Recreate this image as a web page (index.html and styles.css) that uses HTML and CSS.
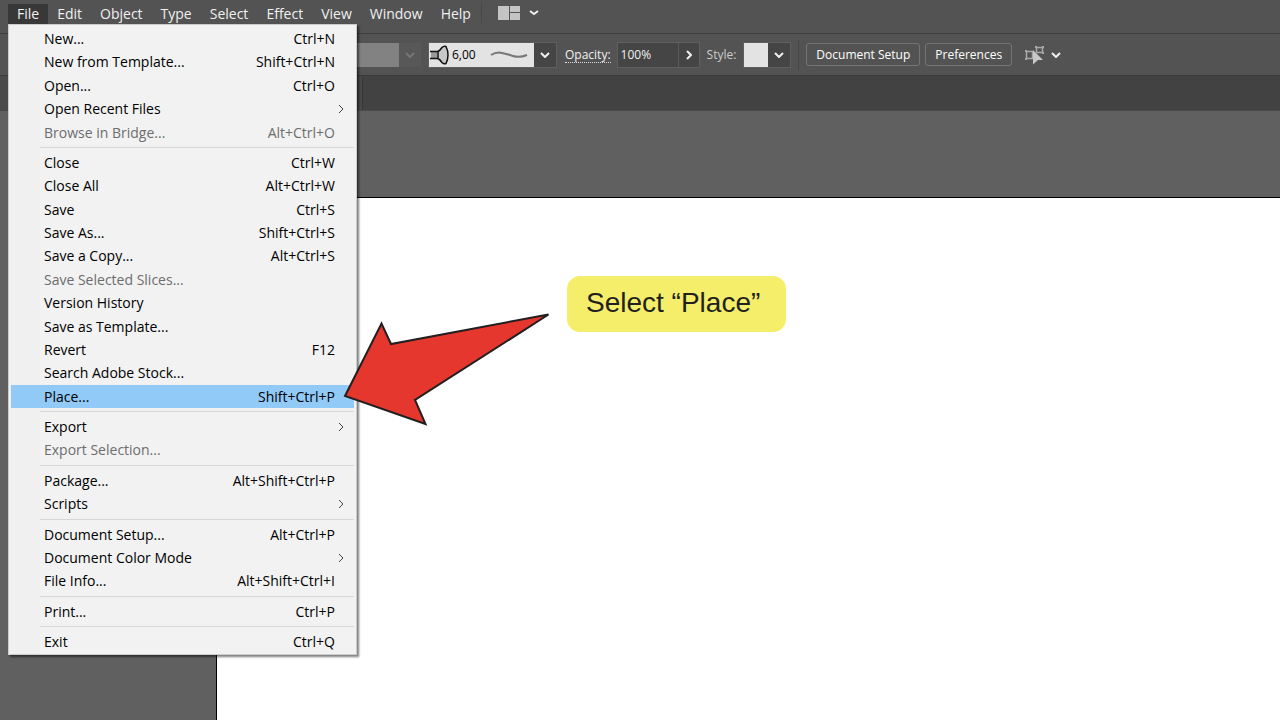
FILE: index.html
```html
<!DOCTYPE html>
<html lang="en">
<head>
<meta charset="utf-8">
<title>Illustrator – File menu</title>
<link rel="stylesheet" href="styles.css">
</head>
<body>
<header class="menubar">
  <nav class="menus" aria-label="Main menu">
    <div class="menu-root">
      <button class="menu-button is-open" type="button" aria-expanded="true">File</button>
      <div class="menu" role="menu">
        <button class="item" type="button"><span>New...</span><span>Ctrl+N</span></button>
        <button class="item" type="button"><span>New from Template...</span><span>Shift+Ctrl+N</span></button>
        <button class="item" type="button"><span>Open...</span><span>Ctrl+O</span></button>
        <button class="item has-sub" type="button"><span>Open Recent Files</span><svg class="sub" viewBox="0 0 6 10"><path d="M1 1l4 4-4 4"/></svg></button>
        <button class="item" type="button" disabled><span>Browse in Bridge...</span><span>Alt+Ctrl+O</span></button>
        <hr class="rule">
        <button class="item" type="button"><span>Close</span><span>Ctrl+W</span></button>
        <button class="item" type="button"><span>Close All</span><span>Alt+Ctrl+W</span></button>
        <button class="item" type="button"><span>Save</span><span>Ctrl+S</span></button>
        <button class="item" type="button"><span>Save As...</span><span>Shift+Ctrl+S</span></button>
        <button class="item" type="button"><span>Save a Copy...</span><span>Alt+Ctrl+S</span></button>
        <button class="item" type="button" disabled><span>Save Selected Slices...</span></button>
        <button class="item" type="button"><span>Version History</span></button>
        <button class="item" type="button"><span>Save as Template...</span></button>
        <button class="item" type="button"><span>Revert</span><span>F12</span></button>
        <button class="item" type="button"><span>Search Adobe Stock...</span></button>
        <button class="item is-active" type="button"><span>Place...</span><span>Shift+Ctrl+P</span></button>
        <hr class="rule">
        <button class="item has-sub" type="button"><span>Export</span><svg class="sub" viewBox="0 0 6 10"><path d="M1 1l4 4-4 4"/></svg></button>
        <button class="item" type="button" disabled><span>Export Selection...</span></button>
        <hr class="rule">
        <button class="item" type="button"><span>Package...</span><span>Alt+Shift+Ctrl+P</span></button>
        <button class="item has-sub" type="button"><span>Scripts</span><svg class="sub" viewBox="0 0 6 10"><path d="M1 1l4 4-4 4"/></svg></button>
        <hr class="rule">
        <button class="item" type="button"><span>Document Setup...</span><span>Alt+Ctrl+P</span></button>
        <button class="item has-sub" type="button"><span>Document Color Mode</span><svg class="sub" viewBox="0 0 6 10"><path d="M1 1l4 4-4 4"/></svg></button>
        <button class="item" type="button"><span>File Info...</span><span>Alt+Shift+Ctrl+I</span></button>
        <hr class="rule">
        <button class="item" type="button"><span>Print...</span><span>Ctrl+P</span></button>
        <hr class="rule">
        <button class="item" type="button"><span>Exit</span><span>Ctrl+Q</span></button>
      </div>
    </div>
    <button class="menu-button" type="button">Edit</button>
    <button class="menu-button" type="button">Object</button>
    <button class="menu-button" type="button">Type</button>
    <button class="menu-button" type="button">Select</button>
    <button class="menu-button" type="button">Effect</button>
    <button class="menu-button" type="button">View</button>
    <button class="menu-button" type="button">Window</button>
    <button class="menu-button" type="button">Help</button>
  </nav>
  <button class="workspace" type="button" aria-label="Arrange documents">
    <svg width="22" height="14" viewBox="0 0 22 14" fill="#c4c4c4"><path d="M0 0h11v14H0zM12 0h10v6H12zM12 7h10v7H12z"/></svg>
    <svg class="chevron" width="10" height="6" viewBox="0 0 10 6"><path d="M1 1l4 3 4-3"/></svg>
  </button>
</header>

<section class="controls" aria-label="Control bar">
  <div class="combo is-dim">
    <input class="profile" type="text" aria-label="Width profile" disabled>
    <button class="drop" type="button" aria-label="Profile options" disabled><svg class="chevron" width="10" height="6" viewBox="0 0 10 6"><path d="M1 1l4 4 4-4"/></svg></button>
  </div>
  <div class="combo brush">
    <button class="brush-face" type="button">
      <svg width="20" height="20" viewBox="0 0 20 20" stroke="#111" stroke-width="1.500"><path d="M1 6.500h6v7H1z" fill="#999" stroke="none"/><path d="M8 6.500q2-1 4-4 2-2 4-1 2 4 2 8.500t-2 8.500q-2 1-4-1-2-3-4-4z" fill="#c8c8c8"/><path d="M0 6.500h8M0 13.500h8" fill="none"/></svg>
      <span>6,00</span>
      <svg class="stroke" width="38" height="8" viewBox="0 0 38 8"><path d="M1 4C9-1 16 3 23 5q7 2 14-1" fill="none" stroke="#777" stroke-width="2"/></svg>
    </button>
    <button class="drop" type="button" aria-label="Brushes"><svg class="chevron" width="10" height="6" viewBox="0 0 10 6"><path d="M1 1l4 4 4-4"/></svg></button>
  </div>
  <label class="opacity-label" for="opacity">Opacity:</label>
  <div class="combo">
    <input class="opacity" id="opacity" type="text" value="100%">
    <button class="drop narrow" type="button" aria-label="Opacity slider"><svg class="chevron" width="6" height="10" viewBox="0 0 6 10"><path d="M1 1l4 4-4 4"/></svg></button>
  </div>
  <span class="style-label" id="style-label">Style:</span>
  <div class="combo" role="group" aria-labelledby="style-label">
    <button class="swatch" type="button" aria-label="Graphic style"></button>
    <button class="drop" type="button" aria-label="Styles"><svg class="chevron" width="10" height="6" viewBox="0 0 10 6"><path d="M1 1l4 4 4-4"/></svg></button>
  </div>
  <div class="actions">
    <button class="action" type="button">Document Setup</button>
    <button class="action" type="button">Preferences</button>
    <button class="select-similar" type="button" aria-label="Select similar objects">
      <svg width="20" height="20" viewBox="0 0 20 20" fill="none" stroke="#a8a8a8"><path d="M1.500 6.500h6v7h-6zM11.500 2.500h6v5h-6z" stroke-width="1.500"/><path d="M0 5h2v2H0zM0 13h2v2H0zM10 1h2v2h-2zM17 1h2v2h-2zM17 7h2v2h-2z" fill="#a8a8a8" stroke="none"/><path d="M8 5l10 10h-5L8 19.500z" fill="#c8c8c8" stroke="none"/></svg>
      <svg class="chevron" width="10" height="6" viewBox="0 0 10 6"><path d="M1 1l4 4 4-4"/></svg>
    </button>
  </div>
</section>

<div class="tabs"><div class="tab"></div></div>

<main class="workarea">
  <div class="artboard"></div>
</main>

<svg class="arrow" width="210" height="116" viewBox="342 312 210 116"><path d="M345 396l36.500-72.500 9.500 20.500 157.500-29.500L415 400l10.500 24z" fill="#e5372d" stroke="#231f20" stroke-width="2"/></svg>
<p class="callout">Select “Place”</p>
</body>
</html>
```
FILE: styles.css
```css
* {
  box-sizing: border-box;
}

body {
  margin: 0;
  min-height: 100vh;
  display: flex;
  flex-direction: column;
  position: relative;
  background: #606060;
  font-family: "Open Sans", "Noto Sans", sans-serif;
  font-size: 14px;
  color: #f0f0f0;
}

button,
input {
  margin: 0;
  padding: 0;
  border: 0;
  border-radius: 0;
  background: none;
  font: inherit;
  color: inherit;
}

svg {
  display: block;
  flex: none;
}

.chevron {
  fill: none;
  stroke: #f0f0f0;
  stroke-width: 2;
}

/* Menu bar */
.menubar {
  display: flex;
  height: 34px;
  padding-left: 8px;
  background: #535353;
  border-bottom: 1px solid #3e3e3e;
}

.menus {
  display: flex;
  align-items: flex-start;
  padding-top: 4px;
}

.menu-root {
  position: relative;
}

.menu-button {
  display: block;
  height: 20px;
  padding: 0 9px;
  line-height: 18px;
}

.menu-button.is-open {
  background: #383838;
}

.workspace {
  display: flex;
  align-items: center;
  gap: 9px;
  height: 20px;
  margin: 3px 0 0 1px;
  padding-left: 16px;
  border-left: 1px solid #474747;
}

/* Drop-down menu */
.menu {
  position: absolute;
  z-index: 2;
  top: 100%;
  left: 0;
  width: 349px;
  padding: 2px 2px 1px;
  background: linear-gradient(90deg, #f0f0f0 31px, #f2f2f2 31px);
  border: 1px solid #ccc;
  box-shadow: 2px 2px 2px rgba(0, 0, 0, 0.5);
}

.item {
  display: flex;
  justify-content: space-between;
  align-items: center;
  width: 100%;
  padding: 0 19px 0 33px;
  line-height: 1.67;
  color: #000;
  text-align: left;
}

.item.has-sub {
  padding-right: 10px;
}

.item:disabled {
  color: #6d6d6d;
}

.item.is-active {
  background: #91c9f7;
}

.sub {
  width: 6px;
  height: 10px;
  fill: none;
  stroke: #444;
}

.rule {
  height: 1px;
  margin: 3px 0 3px 29px;
  border: 0;
  background: #d7d7d7;
}

/* Control bar */
.controls {
  display: flex;
  align-items: center;
  height: 42px;
  padding-left: 240px;
  background: #535353;
  border-bottom: 1px solid #3a3a3a;
  font-size: 12px;
}

.combo {
  display: flex;
  align-items: stretch;
  height: 24px;
  outline: 1px solid #5f5f5f;
}

.drop {
  display: flex;
  align-items: center;
  justify-content: center;
  width: 22px;
  background: #454545;
}

.narrow {
  width: 21px;
  border-left: 1px solid #5a5a5a;
}

.is-dim {
  outline: 0;
  margin-right: 8px;
}

.is-dim .drop {
  background: #585858;
}

.is-dim .chevron {
  stroke: #777;
}

.profile {
  width: 159px;
  background: #828282;
}

.brush-face {
  display: flex;
  align-items: center;
  width: 105px;
  padding-left: 1px;
  gap: 2px;
  background: #e3e3e3;
  color: #000;
}

.stroke {
  margin-left: 12px;
}

.opacity-label {
  margin: 0 7px 0 9px;
  line-height: 15px;
  border-bottom: 1px dotted #ddd;
}

.opacity {
  width: 60px;
  padding-left: 3px;
  background: #454545;
}

.style-label {
  margin: 0 8px;
  color: #ccc;
}

.swatch {
  width: 24px;
  background: #e3e3e3;
}

.actions {
  display: flex;
  align-items: center;
  gap: 5px;
  height: 30px;
  margin-left: 8px;
  padding-left: 7px;
  border-left: 1px solid #484848;
}

.action {
  height: 23px;
  padding: 0 9px;
  border: 1px solid #757575;
  border-radius: 3px;
  line-height: 21px;
  color: #fff;
}

.select-similar {
  display: flex;
  align-items: center;
  gap: 6px;
  margin-left: 8px;
}

/* Document tabs */
.tabs {
  height: 35px;
  background: #424242;
  border-bottom: 1px solid #4a4a4a;
}

.tab {
  width: 363px;
  height: 100%;
  background: #4a4a4a;
  border-right: 1px solid #383838;
}

/* Canvas */
.workarea {
  flex: 1;
  display: flex;
  padding: 86px 0 0 216px;
}

.artboard {
  flex: 1;
  background: #fff;
  border: solid #000;
  border-width: 1px 0 0 1px;
}

.arrow {
  position: absolute;
  z-index: 3;
  left: 342px;
  top: 312px;
}

.callout {
  position: absolute;
  left: 567px;
  top: 276px;
  margin: 0;
  padding: 11px 26px 13px 19px;
  border-radius: 13px;
  background: #f4ee6a;
  color: #231f20;
  font: 28px/32px "Liberation Sans", Arial, sans-serif;
}
```
